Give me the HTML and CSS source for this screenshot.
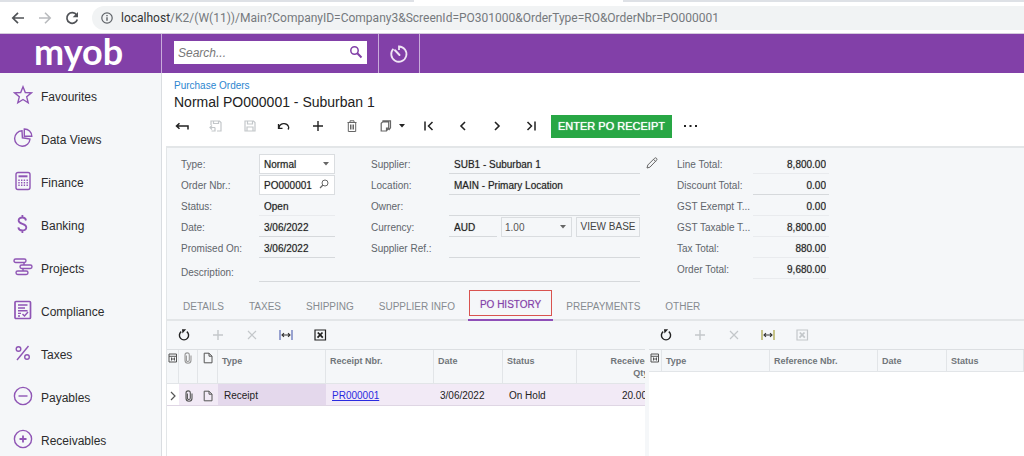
FILE: index.html
```html
<!DOCTYPE html>
<html lang="en">
<head>
<meta charset="utf-8">
<title>Purchase Orders</title>
<link rel="stylesheet" href="styles.css">
</head>
<body>
<svg class="defs" aria-hidden="true">
  <symbol id="refresh" viewBox="0 0 14 14"><path d="M4.2 3.6A4.6 4.6 0 1 0 9.8 3.6" fill="none" stroke="currentColor" stroke-width="1.4"/><path d="M5 1.2h4.2L5.4 5.4z" fill="currentColor"/></symbol>
  <symbol id="plus" viewBox="0 0 14 14"><path d="M7 2v10M2 7h10" stroke="currentColor" stroke-width="1.4"/></symbol>
  <symbol id="cross" viewBox="0 0 14 14"><path d="M3 3l8 8M11 3l-8 8" stroke="currentColor" stroke-width="1.2"/></symbol>
  <symbol id="fit" viewBox="0 0 14 14"><path d="M1 2v10M13 2v10" stroke="currentColor" stroke-width="1.2"/><path d="M3 7h8M5 5.2L3 7l2 1.8M9 5.2L11 7 9 8.8" fill="none" stroke="#333" stroke-width="1.1"/></symbol>
  <symbol id="excel" viewBox="0 0 14 14"><path d="M2 2h10.500v10H2z" fill="none" stroke="currentColor" stroke-width="1.2"/><path d="M4.800 4.500l5 5.200M9.500 4.500l-5 5.200" stroke="currentColor" stroke-width="1.800"/></symbol>
  <symbol id="clip" viewBox="0 0 10 12"><path d="M3.400 3.500v4.500a1.400 1.400 0 0 0 2.900 0V3a2 2 0 0 0-4.300 0v5.200a3 3 0 0 0 6 0V3.500" fill="none" stroke="currentColor" stroke-width="1.100"/></symbol>
  <symbol id="page" viewBox="0 0 10 12"><path d="M1.200 1.200h4.800l3 3v6.600H1.200zM6 1.200v3h3" fill="none" stroke="currentColor"/></symbol>
  <symbol id="settings" viewBox="0 0 10 12"><path d="M1 2h7.500v8H1zM1 4.300h7.500M3.500 7h3M3.500 5.500v3M6.500 5.500v3" fill="none" stroke="currentColor"/></symbol>
  <symbol id="glass" viewBox="0 0 14 14"><circle cx="5.500" cy="5.500" r="3.700" fill="none" stroke="currentColor" stroke-width="1.500"/><path d="M8.300 8.300l4.200 4.200" stroke="currentColor" stroke-width="2"/></symbol>
  <symbol id="caret" viewBox="0 0 6 4"><path d="M0 0h6L3 3.500z" fill="currentColor"/></symbol>
</svg>

<header class="browser">
  <div class="tabstrip"><span class="strip-left"></span><span class="strip-gap"></span><span class="strip-right"></span></div>
  <div class="addressbar">
    <button class="nav-btn" aria-label="Back"><svg width="14" height="14" viewBox="0 0 14 14"><path d="M13 7H2M7 1.800L1.800 7 7 12.200" fill="none" stroke="currentColor" stroke-width="1.700"/></svg></button>
    <button class="nav-btn faded" aria-label="Forward"><svg width="14" height="14" viewBox="0 0 14 14"><path d="M1 7h11M7 1.800L12.200 7 7 12.200" fill="none" stroke="currentColor" stroke-width="1.600"/></svg></button>
    <button class="nav-btn" aria-label="Reload"><svg width="14" height="14" viewBox="0 0 14 14"><path d="M11.600 4A5.300 5.300 0 1 0 12.300 8.500" fill="none" stroke="currentColor" stroke-width="1.700"/><path d="M13 1v5.300H7.700z" fill="currentColor"/></svg></button>
    <div class="url">
      <svg width="12" height="12" viewBox="0 0 12 12"><circle cx="6" cy="6" r="5.200" fill="none" stroke="#5f6368" stroke-width="1.200"/><path d="M6 5.200v3.600M6 3v1.300" stroke="#5f6368" stroke-width="1.400"/></svg>
      <span class="url-text"><span class="host">localhost</span>/K2/(W(11))/Main?CompanyID=Company3&amp;ScreenId=PO301000&amp;OrderType=RO&amp;OrderNbr=PO000001</span>
    </div>
  </div>
</header>

<div class="brandbar">
  <div class="logo">myob</div>
  <div class="search">
    <input type="search" placeholder="Search..." aria-label="Search">
    <button aria-label="Run search"><svg width="14" height="14"><use href="#glass"/></svg></button>
  </div>
  <button class="history" aria-label="Recent"><svg width="20" height="20" viewBox="0 0 20 20"><path d="M4.400 4.800A7.600 7.600 0 1 0 10 2.500V6" fill="none" stroke="currentColor" stroke-width="1.800"/><path d="M10.500 11L6 6.300" stroke="currentColor" stroke-width="2" stroke-linecap="round"/></svg></button>
</div>

<div class="workspace">
  <nav class="sidebar">
    <a href="#"><svg viewBox="0 0 20 20"><path d="M10 1.800l2.300 5.700 6.100.4-4.700 3.900 1.500 6L10 14.500l-5.200 3.300 1.500-6L1.600 7.900l6.100-.4z"/></svg><span>Favourites</span></a>
    <a href="#"><svg viewBox="0 0 20 20"><path d="M9 2.800A7.700 7.700 0 1 0 17 11L12.500 10.300 9.400 9.800z"/><path d="M11.300 1v7.300h7.500A7.400 7.400 0 0 0 11.300 1z"/></svg><span>Data Views</span></a>
    <a href="#"><svg viewBox="0 0 20 20"><rect x="3" y="1.500" width="14" height="17" rx="2"/><path d="M5.500 5.300h9" stroke-width="2"/><path d="M6 8.500v7.500M8.700 8.500v7.500M11.400 8.500v7.500M14.200 8.500v7.500" stroke-dasharray="1.500 1"/></svg><span>Finance</span></a>
    <a href="#"><svg viewBox="0 0 20 20"><path d="M13 6.500C12.700 4.600 11.300 3.500 9.300 3.500S5.600 4.700 5.600 6.500c0 4.300 7.700 2.400 7.700 6.800 0 2-1.600 3.200-3.900 3.200S5.600 15.300 5.300 13.300M9.400 1v2.500M9.400 16.500V19" stroke-width="1.800"/></svg><span>Banking</span></a>
    <a href="#"><svg viewBox="0 0 20 20"><rect x="1" y="2" width="12" height="3.500" rx="1.700"/><rect x="7" y="8" width="12" height="3.500" rx="1.700"/><rect x="3" y="14" width="12" height="3.500" rx="1.700"/><path d="M11 5.500V8M10 11.500V14"/></svg><span>Projects</span></a>
    <a href="#"><svg viewBox="0 0 20 20"><rect x="2" y="1.500" width="15.500" height="17" rx="1" stroke-width="1.700"/><path d="M5 5h9.500M5 8h7M5 10.700h9.500M5 13.400h3M5 16h2M9.500 14l2 2 3.500-4"/></svg><span>Compliance</span></a>
    <a href="#"><svg viewBox="0 0 20 20"><circle cx="5.500" cy="6" r="2.300"/><circle cx="14" cy="14" r="2.300"/><path d="M15.500 3L4 17"/></svg><span>Taxes</span></a>
    <a href="#"><svg viewBox="0 0 20 20"><circle cx="10" cy="10" r="8.600"/><path d="M5.500 10h9"/></svg><span>Payables</span></a>
    <a href="#"><svg viewBox="0 0 20 20"><circle cx="10" cy="10" r="8.600"/><path d="M6.500 10h7M10 6.500v7" stroke-width="1.800"/></svg><span>Receivables</span></a>
  </nav>

  <main class="main">
    <div class="heading">
      <a class="crumb" href="#">Purchase Orders</a>
      <h1>Normal PO000001 - Suburban 1</h1>
    </div>
    <div class="toolbar">
      <button aria-label="Back to list"><svg viewBox="0 0 14 14"><path d="M13 10.500V7H1.500M4.500 4.200L1.500 7l3 2.800" fill="none" stroke="currentColor" stroke-width="1.500"/></svg></button>
      <button class="off" aria-label="Save and close"><svg viewBox="0 0 14 14"><path d="M2 6V2h8.500L12 3.500V12H8M4.500 2v2.500h5V2M1 8.500h5M3 6.500l-2 2 2 2M6 8.500V12H2.500" fill="none" stroke="currentColor" stroke-width="1.200"/></svg></button>
      <button class="off" aria-label="Save"><svg viewBox="0 0 14 14"><path d="M2 2h8.500L12 3.500V12H2zM4.500 2v3h5V2M4 12V8h6v4" fill="none" stroke="currentColor" stroke-width="1.200"/></svg></button>
      <button aria-label="Undo"><svg viewBox="0 0 14 14"><path d="M2 9a5 5 0 0 1 9.500-1.500c.5 1 .3 2-.5 3M1.500 5v4.300h4" fill="none" stroke="currentColor" stroke-width="1.300"/></svg></button>
      <button aria-label="Add"><svg><use href="#plus"/></svg></button>
      <button aria-label="Delete"><svg class="dim" viewBox="0 0 14 14"><path d="M2.500 3.500h9M5 3.500V1.800h4v1.700M3.300 3.500V12.500h7.400V3.500M5.500 5.500v5M7 5.500v5M8.500 5.500v5" fill="none" stroke="currentColor"/></svg></button>
      <button class="copy" aria-label="Copy"><svg class="dim" viewBox="0 0 14 14"><path d="M4 3V1.800h7.500v7L9.700 11M3.500 3h6.200v6L7.500 12H2.200V4.300zM7.500 12V9.200h2.200" fill="none" stroke="currentColor" stroke-width="1.200"/></svg><svg class="caret"><use href="#caret"/></svg></button>
      <button aria-label="First"><svg viewBox="0 0 14 14"><path d="M3 2.500v9M10.500 3l-4 4 4 4" fill="none" stroke="currentColor" stroke-width="1.500"/></svg></button>
      <button aria-label="Previous"><svg viewBox="0 0 14 14"><path d="M9 3L5 7l4 4" fill="none" stroke="currentColor" stroke-width="1.600"/></svg></button>
      <button aria-label="Next"><svg viewBox="0 0 14 14"><path d="M5 3l4 4-4 4" fill="none" stroke="currentColor" stroke-width="1.600"/></svg></button>
      <button aria-label="Last"><svg viewBox="0 0 14 14"><path d="M3.500 3l4 4-4 4M11 2.500v9" fill="none" stroke="currentColor" stroke-width="1.500"/></svg></button>
      <button class="primary">ENTER PO RECEIPT</button>
      <button aria-label="More"><svg viewBox="0 0 14 14"><path d="M0 6h2v2H0zM5.500 6h2v2h-2zM11 6h2v2h-2z" fill="currentColor"/></svg></button>
    </div>

    <section class="panel">
      <form class="form">
        <div class="fields">
          <div class="col">
            <div class="row"><label for="type">Type:</label><span class="box"><select id="type"><option>Normal</option></select><svg class="caret"><use href="#caret"/></svg></span></div>
            <div class="row"><label for="nbr">Order Nbr.:</label><span class="box"><input id="nbr" value="PO000001"><button type="button" class="lookup" aria-label="Look up order"><svg width="10" height="10" viewBox="0 0 10 10"><circle cx="6" cy="4" r="3" fill="none" stroke="currentColor"/><path d="M4 6L1 9" stroke="currentColor" stroke-width="1.300"/></svg></button></span></div>
            <div class="row"><label for="status">Status:</label><input class="line faint" id="status" value="Open" readonly></div>
            <div class="row"><label for="date">Date:</label><input class="line" id="date" value="3/06/2022"></div>
            <div class="row"><label for="promised">Promised On:</label><input class="line" id="promised" value="3/06/2022"></div>
          </div>
          <div class="col">
            <div class="row"><label for="supplier">Supplier:</label><input class="line" id="supplier" value="SUB1 - Suburban 1"></div>
            <div class="row"><label for="location">Location:</label><input class="line" id="location" value="MAIN - Primary Location"></div>
            <div class="row"><label for="owner">Owner:</label><input class="line" id="owner"></div>
            <div class="row"><label for="currency">Currency:</label><span class="currency"><input class="line" id="currency" value="AUD"><span class="box plain"><select aria-label="Rate"><option>1.00</option></select><svg class="caret"><use href="#caret"/></svg></span><button type="button" class="base">VIEW BASE</button></span></div>
            <div class="row"><label for="ref">Supplier Ref.:</label><input class="line" id="ref"></div>
          </div>
          <div class="row wide"><label for="desc">Description:</label><input class="line" id="desc"></div>
        </div>
        <button type="button" class="edit" aria-label="Edit supplier"><svg width="12" height="12" viewBox="0 0 12 12"><path d="M1 11l.8-3L8.500 1.300a1.300 1.300 0 0 1 2 2L3.900 10.200zM7.500 2.300l2.200 2.200" fill="none" stroke="currentColor"/></svg></button>
        <div class="col totals">
          <div class="row"><label for="t1">Line Total:</label><input class="line faint" id="t1" value="8,800.00" readonly></div>
          <div class="row"><label for="t2">Discount Total:</label><input class="line" id="t2" value="0.00"></div>
          <div class="row"><label for="t3">GST Exempt T...</label><input class="line faint" id="t3" value="0.00" readonly></div>
          <div class="row"><label for="t4">GST Taxable T...</label><input class="line faint" id="t4" value="8,800.00" readonly></div>
          <div class="row"><label for="t5">Tax Total:</label><input class="line faint" id="t5" value="880.00" readonly></div>
          <div class="row"><label for="t6">Order Total:</label><input class="line faint" id="t6" value="9,680.00" readonly></div>
        </div>
      </form>

      <div class="tabs" role="tablist">
        <button role="tab">DETAILS</button><button role="tab">TAXES</button><button role="tab">SHIPPING</button><button role="tab">SUPPLIER INFO</button><button role="tab" class="active" aria-selected="true"><span>PO HISTORY</span></button><button role="tab">PREPAYMENTS</button><button role="tab">OTHER</button>
      </div>

      <div class="grids">
        <div class="pane receipts">
          <div class="gridbar">
            <button aria-label="Refresh"><svg><use href="#refresh"/></svg></button>
            <button class="off" aria-label="Add row"><svg><use href="#plus"/></svg></button>
            <button class="off" aria-label="Delete row"><svg><use href="#cross"/></svg></button>
            <button class="blue" aria-label="Fit columns"><svg><use href="#fit"/></svg></button>
            <button aria-label="Export"><svg><use href="#excel"/></svg></button>
          </div>
          <div class="gridbody">
            <table class="receipt-table">
              <colgroup><col class="c-mark"><col class="c-clip"><col class="c-note"><col class="c-wide"><col class="c-wide"><col class="c-date"><col class="c-status"><col class="c-qty"></colgroup>
              <thead><tr><th class="ic"><svg><use href="#settings"/></svg></th><th class="ic"><svg class="pale"><use href="#clip"/></svg></th><th class="ic"><svg><use href="#page"/></svg></th><th>Type</th><th>Receipt Nbr.</th><th>Date</th><th>Status</th><th class="num">Received<br>Qty.</th></tr></thead>
              <tbody><tr><td class="ic marker"><svg viewBox="0 0 10 12"><path d="M3 2l4 4-4 4" fill="none" stroke="currentColor" stroke-width="1.200"/></svg></td><td class="ic"><svg><use href="#clip"/></svg></td><td class="ic"><svg><use href="#page"/></svg></td><td class="current">Receipt</td><td><a href="#">PR000001</a></td><td>3/06/2022</td><td>On Hold</td><td class="num">20.00</td></tr></tbody>
            </table>
          </div>
        </div>
        <div class="pane bills">
          <div class="gridbar">
            <button aria-label="Refresh"><svg><use href="#refresh"/></svg></button>
            <button class="off" aria-label="Add row"><svg><use href="#plus"/></svg></button>
            <button class="off" aria-label="Delete row"><svg><use href="#cross"/></svg></button>
            <button class="olive" aria-label="Fit columns"><svg><use href="#fit"/></svg></button>
            <button class="off" aria-label="Export"><svg><use href="#excel"/></svg></button>
          </div>
          <div class="gridbody">
            <table class="bill-table">
              <colgroup><col class="c-first"><col class="c-wide"><col class="c-wide"><col class="c-date"><col></colgroup>
              <thead><tr><th class="ic"><svg><use href="#settings"/></svg></th><th>Type</th><th>Reference Nbr.</th><th>Date</th><th>Status</th></tr></thead>
            </table>
          </div>
        </div>
      </div>
    </section>
  </main>
</div>
</body>
</html>
```
FILE: styles.css
```css
* { box-sizing: border-box; }
body {
  margin: 0;
  height: 100vh;
  display: flex;
  flex-direction: column;
  overflow: hidden;
  background: #fff;
  color: #222;
  font: 10px/12px "Liberation Sans", Arial, sans-serif;
}
button, input, select {
  margin: 0;
  padding: 0;
  border: 0;
  border-radius: 0;
  background: none;
  color: inherit;
  font: inherit;
  min-width: 0;
}
a { text-decoration: none; }
.defs { display: none; }

.tabstrip { display: flex; height: 2px; }
.strip-left { width: 414px; background: #dee1e6; }
.strip-gap { width: 209px; }
.strip-right { flex: 1; background: #dee1e6; }
.addressbar {
  display: flex;
  align-items: center;
  height: 32px;
  padding-left: 11px;
  border-bottom: 1px solid #d5cbdc;
}
.nav-btn { width: 27px; height: 14px; color: #505357; text-align: left; }
.nav-btn svg { display: block; }
.nav-btn.faded { color: #b9bbbe; }
.url {
  flex: 1;
  display: flex;
  align-items: center;
  gap: 8px;
  height: 24px;
  padding-left: 9px;
  border-radius: 12px 0 0 12px;
  background: #f1f3f4;
  color: #75797d;
  font: 12px/16px Roboto, sans-serif;
  white-space: nowrap;
}
.host { color: #333; }

.brandbar {
  display: flex;
  align-items: stretch;
  height: 39px;
  flex: none;
  background: #8240a8;
  color: #fff;
}
.logo {
  width: 162px;
  padding-left: 34px;
  border-right: 1px solid #c9abdb;
  font: bold 36px/34px Lato, sans-serif;
}
.search {
  display: flex;
  align-items: center;
  width: 193px;
  height: 23px;
  margin: 7px 11px 0 12px;
  padding: 0 4px;
  background: #fff;
  color: #8240a8;
}
.search input { flex: 1; font-size: 12px; font-style: italic; outline: 0; }
.search input::placeholder { color: #777; opacity: 1; }
.search button { height: 16px; }
.history {
  width: 42px;
  border: solid #c9abdb;
  border-width: 0 1px;
  color: #f0e6f5;
}
.history svg { display: block; margin: auto; }

.workspace { display: flex; flex: 1; min-height: 0; }
.sidebar {
  width: 162px;
  flex: none;
  padding-top: 2px;
  background: #f5f7f9;
  border-right: 1px solid #dadde1;
  overflow: hidden;
}
.sidebar a {
  display: flex;
  gap: 8px;
  height: 43px;
  padding: 10px 0 0 13px;
  color: #2c2c2c;
  font-size: 12px;
  line-height: 24px;
}
.sidebar svg {
  width: 20px;
  height: 20px;
  fill: none;
  stroke: #8f55b5;
  stroke-width: 1.4;
}
.main { flex: 1; min-width: 0; display: flex; flex-direction: column; }
.heading { padding: 7px 0 0 12px; }
.crumb { display: block; color: #2c86d0; }
h1 { margin: 2px 0 0; font-size: 14px; line-height: 16px; font-weight: normal; }
.toolbar { display: flex; align-items: center; height: 32px; margin-bottom: 4px; padding-left: 3px; }
.toolbar button { width: 34px; height: 20px; flex: none; }
.toolbar svg, .gridbar svg { display: block; width: 14px; height: 14px; margin: auto; }
.toolbar .dim { color: #666; }
.toolbar .off, .gridbar .off { color: #c3c7ca; }
.toolbar .copy { width: 43px; display: flex; align-items: center; gap: 6px; padding-left: 10px; }
.toolbar .copy svg { margin: 0; flex: none; }
svg.caret, .toolbar svg.caret { width: 6px; height: 4px; flex: none; }
.toolbar .primary {
  width: auto;
  height: 23px;
  margin: 0 2px 0 3px;
  padding: 0 7px;
  background: #28a745;
  color: #fff;
  font-size: 11px;
  text-shadow: 0 0 1px #fff;
}

.panel {
  flex: 1;
  display: flex;
  flex-direction: column;
  min-height: 0;
  margin-left: 4px;
  border: solid #e3e6e8;
  border-width: 2px 0 0 1px;
  background: #f5f7f9;
}
.form { display: flex; align-items: flex-start; padding: 6px 0 0 14px; }
.fields {
  display: grid;
  grid-template-columns: 154px 269px;
  column-gap: 36px;
  row-gap: 3px;
}
.row { display: grid; grid-template-columns: 78px 1fr; height: 21px; }
.wide { grid-column: 1 / -1; }
.row label { color: #5f656b; line-height: 22px; white-space: nowrap; }
.line {
  width: 100%;
  height: 20px;
  padding: 2px 5px 0;
  border-bottom: 1px solid #d6d9dc;
}
.line, .box input, .box:not(.plain) select { text-shadow: 0 0 1px #999; }
.faint { border-color: #e9ebee; }
.box {
  display: flex;
  align-items: center;
  width: 100%;
  height: 20px;
  padding: 0 5px 0 4px;
  border: 1px solid #dadde0;
  background: #fff;
}
.box select, .box input { flex: 1; width: 100%; height: 18px; padding-top: 1px; appearance: none; }
.box .caret { color: #666; }
.lookup { width: 10px; height: 12px; color: #666; }
.plain { background: none; padding-left: 3px; color: #555; }
.currency { display: grid; grid-template-columns: 48px 71px 1fr; column-gap: 4px; }
.base { height: 20px; border: 1px solid #dadde0; color: #444; white-space: nowrap; }
.edit { width: 37px; height: 18px; padding-left: 6px; color: #666; text-align: left; }
.edit svg { display: block; }
.totals { width: 152px; }
.totals .row { grid-template-columns: 76px 1fr; }
.totals .line { padding-right: 3px; text-align: right; }

.tabs {
  display: flex;
  gap: 1px;
  height: 32px;
  margin-top: 6px;
  padding-left: 4px;
  border-bottom: 2px solid #e3e6e8;
}
.tabs button { height: 32px; padding: 3px 12px 0; color: #868b90; white-space: nowrap; }
.tabs .active {
  display: flex;
  padding: 1px 1px 3px;
  border-bottom: 2px solid #8f4fb8;
  color: #8240a8;
  text-shadow: 0 0 1px #c9abdb;
}
.active span { height: 26px; border: 1px solid #d9534f; padding: 2px 10px 0; line-height: 24px; }

.grids { flex: 1; display: flex; gap: 4px; min-height: 0; }
.pane { display: flex; flex-direction: column; overflow: hidden; }
.receipts { width: 478px; flex: none; }
.bills { flex: 1; min-width: 0; }
.gridbar { display: flex; align-items: center; height: 28px; flex: none; }
.gridbar button { width: 34px; height: 20px; flex: none; }
.gridbar .blue { color: #5b6bb5; }
.gridbar .olive { color: #a7a13c; }
.gridbody { flex: 1; border-top: 1px solid #dcdfe2; background: #fff; overflow: hidden; }
table { table-layout: fixed; border-collapse: separate; border-spacing: 0; }
.receipt-table { width: 488px; }
.bill-table { width: 100%; }
.c-mark { width: 12px; }
.c-first { width: 13px; }
.c-clip { width: 19px; }
.c-note { width: 20px; }
.c-wide { width: 108px; }
.c-date { width: 69px; }
.c-status { width: 74px; }
.c-qty { width: 78px; }
th {
  height: 22px;
  padding: 5px 4px 4px;
  border: solid #e2e5e8;
  border-width: 0 1px 1px 0;
  background: #f5f7f9;
  color: #70757a;
  font-size: 9px;
  line-height: 12px;
  text-align: left;
  vertical-align: top;
}
.receipt-table th { height: 34px; }
th.num, .num { text-align: right; }
td {
  height: 22px;
  padding: 3px 6px 0;
  border-bottom: 1px solid #dfd6e4;
  background: #f2eaf6;
}
td.num { padding-right: 8px; }
td a { color: #2a2ae0; text-decoration: underline; }
td.current { background: #e4d8ec; }
td.marker { background: #fff; }
th.ic, td.ic { padding: 2px 0 0; text-align: center; }
.ic svg { display: block; width: 10px; height: 12px; margin: 0 auto; color: #555; }
.ic svg.pale { color: #999; }
```
